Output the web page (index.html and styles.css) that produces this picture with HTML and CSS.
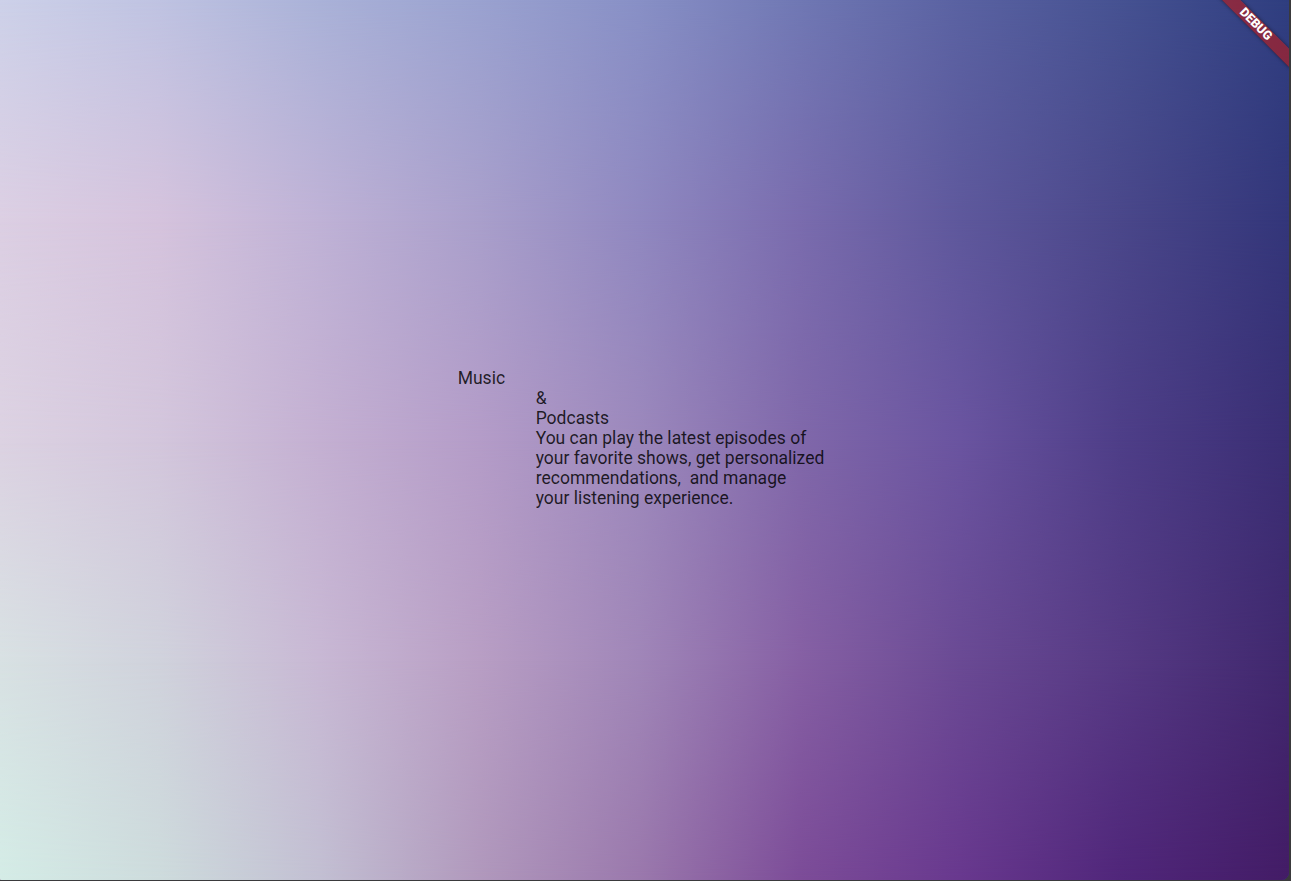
FILE: index.html
```html
<!DOCTYPE html>
<html lang="en">
<head>
<meta charset="utf-8">
<title>Music &amp; Podcasts</title>
<link rel="stylesheet" href="styles.css">
</head>
<body>
<div class="frame">
  <div class="bg bg-r0"></div>
  <div class="bg bg-r1"></div>
  <div class="bg bg-r2"></div>
  <div class="bg bg-r3"></div>
  <div class="bg bg-r4"></div>
  <main class="content">
    <div class="title-left">Music</div>
    <div class="title-right">
      <div class="line empty"></div>
      <div class="line">&amp;</div>
      <div class="line">Podcasts</div>
      <p class="desc">You can play the latest episodes of<br>your favorite shows, get personalized<br>recommendations,&nbsp; and manage<br>your listening experience.</p>
    </div>
  </main>
  <div class="debug-banner"><span>DEBUG</span></div>
</div>
</body>
</html>
```
FILE: styles.css
```css
html, body {
  margin: 0;
  padding: 0;
  background: #3a3a3c;
  width: 1291px;
  height: 881px;
  overflow: hidden;
}

.frame {
  position: relative;
  width: 1289px;
  height: 880px;
  overflow: hidden;
  border-radius: 0 0 8px 2px;
  display: flex;
  align-items: center;
  justify-content: center;
  font-family: Roboto, "Noto Sans", sans-serif;
}

.bg {
  position: absolute;
  inset: 0;
}

.bg-r0 {
  background: linear-gradient(to right,
    #cdd1e9 0%, #bfc3e2 12.4%, #aab2d8 24.8%, #9aa2d0 37.2%, #8890c6 49.6%,
    #7078b4 62%, #5a62a2 74.5%, #465292 86.9%, #2f3e80 100%);
}

.bg-r1 {
  background: linear-gradient(to right,
    #dccfe3 0%, #d5c3dd 12.4%, #bfb2d6 24.8%, #a99fcb 37.2%, #9088c0 49.6%,
    #7a6cae 62%, #5e589c 74.5%, #4a478a 86.9%, #33367a 100%);
  -webkit-mask-image: linear-gradient(to bottom, transparent 0%, #000 25%, #000 100%);
  mask-image: linear-gradient(to bottom, transparent 0%, #000 25%, #000 100%);
}

.bg-r2 {
  background: linear-gradient(to right,
    #dcd2e2 0%, #d3c6dc 12.4%, #c4b0d2 24.8%, #b49cc8 37.2%, #9c88bc 49.6%,
    #8068aa 62%, #6a54a0 74.5%, #4e3e88 86.9%, #3a2e74 100%);
  -webkit-mask-image: linear-gradient(to bottom, transparent 25%, #000 50%, #000 100%);
  mask-image: linear-gradient(to bottom, transparent 25%, #000 50%, #000 100%);
}

.bg-r3 {
  background: linear-gradient(to right,
    #d8e1e3 0%, #d0d2dc 12.4%, #c8b8d4 24.8%, #b89ec4 37.2%, #a086b8 49.6%,
    #8660a4 62%, #6a4a94 74.5%, #563a84 86.9%, #40286e 100%);
  -webkit-mask-image: linear-gradient(to bottom, transparent 50%, #000 75%, #000 100%);
  mask-image: linear-gradient(to bottom, transparent 50%, #000 75%, #000 100%);
}

.bg-r4 {
  background: linear-gradient(to right,
    #d4ece6 0%, #cddbdc 12.4%, #c2bfd2 24.8%, #b098bc 37.2%, #9a78ac 49.6%,
    #7c4c98 62%, #68388e 74.5%, #50267a 86.9%, #431c66 100%);
  -webkit-mask-image: linear-gradient(to bottom, transparent 75%, #000 100%);
  mask-image: linear-gradient(to bottom, transparent 75%, #000 100%);
}

.content {
  position: relative;
  display: flex;
  align-items: flex-start;
  font-size: 17.5px;
  line-height: 20px;
  color: rgba(0, 0, 0, 0.82);
  margin-right: 7px;
  margin-top: -4px;
}

.title-left {
  width: 78px;
}

.title-right {
  display: flex;
  flex-direction: column;
}

.line {
  height: 20px;
}

.desc {
  margin: 0;
  white-space: nowrap;
}

.debug-banner {
  position: absolute;
  left: 1280px;
  top: 0;
  width: 110px;
  height: 13px;
  transform-origin: 0 0;
  transform: rotate(45deg) translate(-55px, 28px);
  background: rgba(183, 28, 28, 0.63);
  box-shadow: 0 0 4px rgba(0, 0, 0, 0.45);
  display: flex;
  align-items: center;
  justify-content: center;
}

.debug-banner span {
  color: #fff;
  font-family: Roboto, "Noto Sans", sans-serif;
  font-weight: 900;
  font-size: 12.5px;
  line-height: 1;
}
```
